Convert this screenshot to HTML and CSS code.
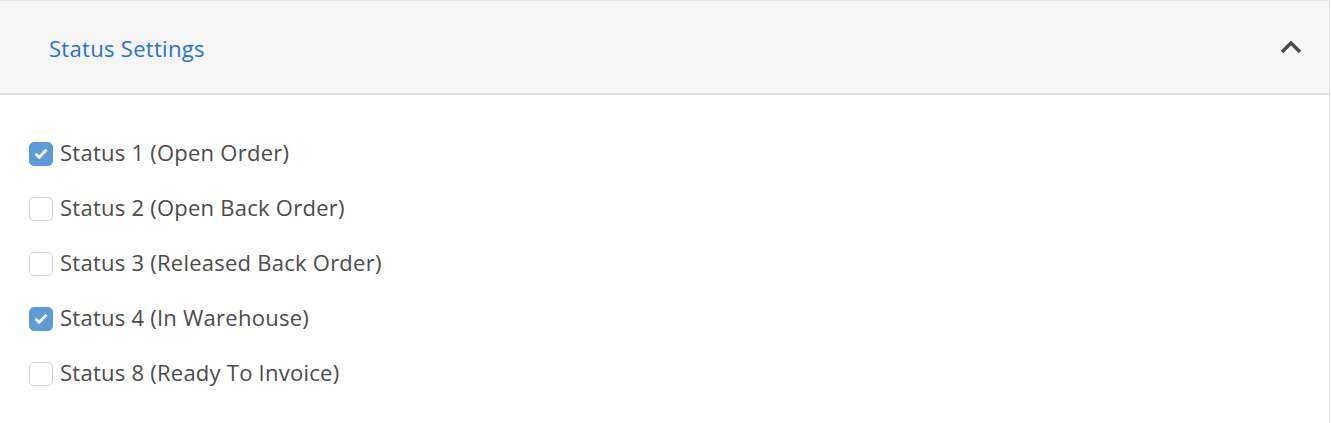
FILE: index.html
```html
<!DOCTYPE html>
<html>
<head>
<meta charset="utf-8">
<link rel="stylesheet" href="styles.css">
</head>
<body>
<div class="card">
  <div class="card-header">
    <span class="title">Status Settings</span>
    <svg class="chevron" width="22" height="14" viewBox="0 0 22 14"><path d="M2 12 L11 3 L20 12" fill="none" stroke="#464c52" stroke-width="3.4"/></svg>
  </div>
  <div class="card-body">
    <label class="row"><span class="box checked"><svg width="16" height="13" viewBox="0 0 16 13"><path d="M2.5 6.8 L6.2 10.2 L13.5 2.8" fill="none" stroke="#fff" stroke-width="2.8"/></svg></span><span class="text">Status 1 (Open Order)</span></label>
    <label class="row"><span class="box"></span><span class="text">Status 2 (Open Back Order)</span></label>
    <label class="row"><span class="box"></span><span class="text">Status 3 (Released Back Order)</span></label>
    <label class="row"><span class="box checked"><svg width="16" height="13" viewBox="0 0 16 13"><path d="M2.5 6.8 L6.2 10.2 L13.5 2.8" fill="none" stroke="#fff" stroke-width="2.8"/></svg></span><span class="text">Status 4 (In Warehouse)</span></label>
    <label class="row"><span class="box"></span><span class="text">Status 8 (Ready To Invoice)</span></label>
  </div>
</div>
</body>
</html>
```

FILE: styles.css
```css
html, body {
  margin: 0;
  padding: 0;
  background: #fff;
}
body {
  font-family: "Open Sans", "Noto Sans", sans-serif;
}
.card {
  width: 1330px;
  height: 423px;
  border-top: 1px solid #e3e3e3;
  border-right: 1px solid #e3e3e3;
  box-sizing: border-box;
}
.card-header {
  height: 94px;
  box-sizing: border-box;
  background: #f6f6f6;
  border-bottom: 2px solid #dedede;
  display: flex;
  align-items: center;
  justify-content: space-between;
  padding: 0 27px 0 49px;
}
.title {
  color: #1f74db;
  font-size: 22px;
  letter-spacing: 0.3px;
  margin-top: 1px;
}
.chevron {
  margin-top: -1px;
}
.card-body {
  padding-top: 31px;
  display: flex;
  flex-direction: column;
}
.row {
  height: 55px;
  display: flex;
  align-items: center;
  padding-left: 29px;
}
.box {
  width: 24px;
  height: 24px;
  box-sizing: border-box;
  border: 1px solid #d3d3d8;
  border-radius: 5px;
  background: #fff;
  display: flex;
  align-items: center;
  justify-content: center;
  margin-right: 7px;
}
.box.checked {
  background: #5b9bd8;
  border-color: #5b9bd8;
}
.text {
  color: #4b4b4b;
  font-size: 22px;
  letter-spacing: 0.25px;
  margin-top: -3px;
}
```
